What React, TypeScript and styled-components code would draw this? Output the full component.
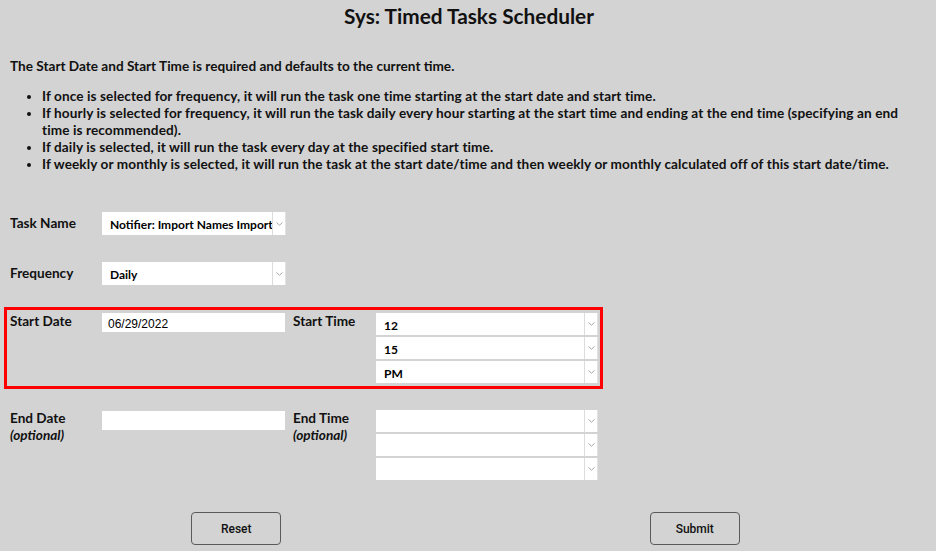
import styled, { createGlobalStyle } from 'styled-components'

const GlobalStyle = createGlobalStyle`
  html, body {
    margin: 0;
    background: #d3d3d3;
  }
  body {
    font-family: Lato, "DejaVu Sans", sans-serif;
    color: #111;
  }
`

function Chevron() {
    return (
        <svg width="7" height="4" viewBox="0 0 7 4">
            <polyline points="0.5,0.5 3.5,3.2 6.5,0.5" fill="none" stroke="#a8a8a8" strokeWidth="1" />
        </svg>
    )
}

function Select({ value, width, height }: { value?: string; width: number; height: number }) {
    return (
        <SelectBox $width={width} $height={height}>
            <SelectValue>{value}</SelectValue>
            <SelectArrow>
                <Chevron />
            </SelectArrow>
        </SelectBox>
    )
}

function TimeSelects({ hour, minute, period }: { hour?: string; minute?: string; period?: string }) {
    return (
        <TimeStack>
            <Select value={hour} width={222} height={22} />
            <Select value={minute} width={222} height={22} />
            <Select value={period} width={222} height={22} />
        </TimeStack>
    )
}

export default function App() {
    return (
        <Page>
            <GlobalStyle />
            <Title>Sys: Timed Tasks Scheduler</Title>
            <Intro>The Start Date and Start Time is required and defaults to the current time.</Intro>
            <Notes>
                <li>If once is selected for frequency, it will run the task one time starting at the start date and start time.</li>
                <li>
                    If hourly is selected for frequency, it will run the task daily every hour starting at the start time and ending at the end time (specifying an end time is recommended).
                </li>
                <li>If daily is selected, it will run the task every day at the specified start time.</li>
                <li>
                    If weekly or monthly is selected, it will run the task at the start date/time and then weekly or monthly calculated off of this start date/time.
                </li>
            </Notes>

            <Form>
                <Row>
                    <Label>Task Name</Label>
                    <Select value="Notifier: Import Names Import" width={184} height={23} />
                </Row>
                <Row>
                    <Label>Frequency</Label>
                    <Select value="Daily" width={184} height={23} />
                </Row>
                <DateRow $required>
                    <Label>Start Date</Label>
                    <DateInput defaultValue="06/29/2022" />
                    <TimeLabel>Start Time</TimeLabel>
                    <TimeSelects hour="12" minute="15" period="PM" />
                </DateRow>
                <DateRow>
                    <Label>
                        End Date
                        <Optional>(optional)</Optional>
                    </Label>
                    <DateInput $offset={1} />
                    <TimeLabel>
                        End Time
                        <Optional>(optional)</Optional>
                    </TimeLabel>
                    <TimeSelects />
                </DateRow>
            </Form>

            <Footer>
                <ButtonCell>
                    <Button type="button">Reset</Button>
                </ButtonCell>
                <ButtonCell>
                    <Button type="button">Submit</Button>
                </ButtonCell>
            </Footer>
        </Page>
    )
}

const Page = styled.div`
    width: 936px;
    height: 551px;
    box-sizing: border-box;
    padding: 4px 10px 0;
    overflow: hidden;
`

const Title = styled.h1`
    margin: 0;
    text-align: center;
    font-size: 20.8px;
    line-height: 24px;
    font-weight: 700;
    padding-left: 2px;
`

const Intro = styled.p`
    margin: 30px 0 0;
    font-size: 13.6px;
    line-height: 17px;
    font-weight: 700;
`

const Notes = styled.ul`
    margin: 13px 0 0;
    padding-left: 32px;
    font-size: 13.6px;
    line-height: 17px;
    font-weight: 700;
    letter-spacing: 0.1px;
    list-style: disc;
`

const Form = styled.div`
    margin-top: 39px;
    display: flex;
    flex-direction: column;
`

const Row = styled.div`
    display: flex;
    align-items: center;
    margin-bottom: 27px;
`

const DateRow = styled.div<{ $required?: boolean }>`
    display: flex;
    align-items: flex-start;
    width: 588px;
    margin: ${p => (p.$required ? '-5px -6px 21px' : '0')};
    padding: ${p => (p.$required ? '3px 2px 3px 3px' : '0')};
    border: ${p => (p.$required ? '3px solid #ff0000' : 'none')};
`

const Label = styled.div`
    width: 92px;
    flex: none;
    font-size: 13.6px;
    line-height: 17px;
    font-weight: 700;
`

const TimeLabel = styled(Label)`
    width: 83px;
    margin-left: 8px;
`

const Optional = styled.span`
    display: block;
    font-style: italic;
`

const SelectBox = styled.div<{ $width: number; $height: number }>`
    display: flex;
    width: ${p => p.$width}px;
    height: ${p => p.$height}px;
    box-sizing: border-box;
    background: #fff;
    border-right: 1px solid #e2e2e2;
`

const SelectValue = styled.span`
    flex: 1;
    padding: 4px 0 0 8px;
    font-size: 12px;
    line-height: 18px;
    font-weight: 700;
    color: #000;
    white-space: nowrap;
    overflow: hidden;
`

const SelectArrow = styled.span`
    width: 12px;
    flex: none;
    display: flex;
    align-items: center;
    justify-content: center;
    border-left: 1px solid #dcdcdc;
`

const TimeStack = styled.div`
    display: flex;
    flex-direction: column;
    gap: 2px;
`

const DateInput = styled.input<{ $offset?: number }>`
    width: 183px;
    height: 19px;
    margin: ${p => p.$offset ?? 0}px 0 0;
    box-sizing: border-box;
    border: none;
    outline: none;
    background: #fff;
    padding: 2px 0 0 6px;
    font-family: "Liberation Sans", Arial, sans-serif;
    font-size: 12px;
    color: #000;
`

const Footer = styled.div`
    display: grid;
    grid-template-columns: 1fr 1fr;
    width: 917px;
    margin: 32px 0 0 -3px;
`

const ButtonCell = styled.div`
    display: flex;
    justify-content: center;
`

const Button = styled.button`
    width: 90px;
    height: 33px;
    box-sizing: border-box;
    border: 1px solid #5a5a5a;
    border-radius: 4px;
    background: transparent;
    font-family: Roboto, "Liberation Sans", sans-serif;
    font-size: 12px;
    font-weight: 500;
    color: #111;
`
